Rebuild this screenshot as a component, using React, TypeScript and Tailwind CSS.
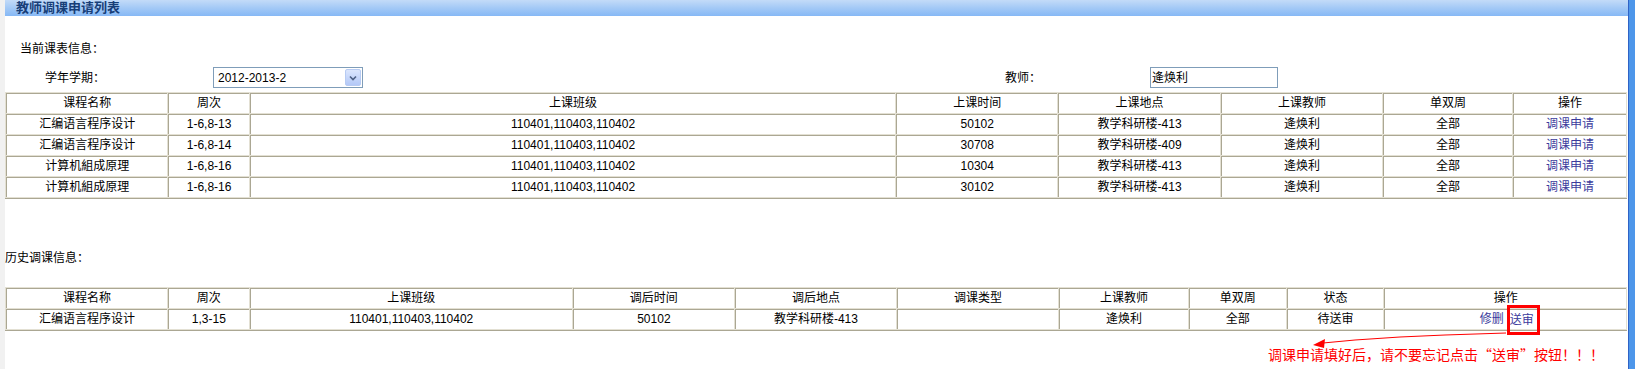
import React from "react"

const current = [
  ["汇编语言程序设计", "1-6,8-13", "110401,110403,110402", "50102", "教学科研楼-413", "逄焕利", "全部"],
  ["汇编语言程序设计", "1-6,8-14", "110401,110403,110402", "30708", "教学科研楼-409", "逄焕利", "全部"],
  ["计算机組成原理", "1-6,8-16", "110401,110403,110402", "10304", "教学科研楼-413", "逄焕利", "全部"],
  ["计算机組成原理", "1-6,8-16", "110401,110403,110402", "30102", "教学科研楼-413", "逄焕利", "全部"],
]

const cell = "h-[20px] border-t border-l border-[#aba793] bg-white p-0 text-center align-middle leading-[19px] font-normal whitespace-nowrap"

function Table({ widths, children }: { widths: string[]; children: React.ReactNode }) {
  return (
    <table className="w-[1622px] table-fixed border-separate border-spacing-[1px] border-b border-b-[#aba793] bg-[#e3e0d3]">
      <colgroup>
        {widths.map((w, i) => (
          <col key={i} style={{ width: w }} />
        ))}
      </colgroup>
      <tbody>{children}</tbody>
    </table>
  )
}

export default function App() {
  return (
    <div className="flex h-[369px] w-[1635px] overflow-hidden bg-white font-['Liberation_Sans','Noto_Sans_CJK_SC',sans-serif] text-[12px] text-black">
      <div className="w-[5px] shrink-0 bg-[#f1f1f1]" />

      <div className="relative flex min-w-0 flex-1 flex-col">
        {/* title bar */}
        <div className="flex h-[16px] items-center bg-gradient-to-b from-[#c3dbf8] via-[#a3c9f6] to-[#86b8f5] pl-[11px] text-[13px] font-bold leading-[16px] text-[#173e78]">
          教师调课申请列表
        </div>

        <div className="pl-[15px] pt-[26px] leading-[14px]">当前课表信息：</div>

        {/* term / teacher row */}
        <div className="mt-[11px] flex h-[21px] items-center">
          <div className="w-[208px] pl-[40px]">学年学期：</div>
          <div className="flex h-[21px] w-[150px] items-center justify-between border border-[#7f9db9] bg-white pl-[4px]">
            <span>2012-2013-2</span>
            <div className="mr-[1px] flex h-[17px] w-[16px] items-center justify-center rounded-[2px] border border-[#b7cbf3] bg-gradient-to-b from-[#dbe6fd] to-[#b3c8f7]">
              <svg width="8" height="6" viewBox="0 0 8 6">
                <path d="M1 1.5 L4 4.5 L7 1.5" fill="none" stroke="#4d6185" strokeWidth="1.6" />
              </svg>
            </div>
          </div>
          <div className="ml-[642px] w-[145px]">教师：</div>
          <div className="flex h-[21px] w-[128px] items-center border border-[#7f9db9] bg-white pl-[1px]">逄焕利</div>
        </div>

        {/* current schedule */}
        <div className="mt-[4px]">
          <Table widths={["10%", "5%", "40%", "10%", "10%", "10%", "8%", "7%"]}>
            <tr>
              {["课程名称", "周次", "上课班级", "上课时间", "上课地点", "上课教师", "单双周", "操作"].map((h) => (
                <th key={h} className={cell}>{h}</th>
              ))}
            </tr>
            {current.map((row, i) => (
              <tr key={i}>
                {row.map((v, j) => (
                  <td key={j} className={cell}>{v}</td>
                ))}
                <td className={cell}>
                  <a className="text-[#3b3b9c]">调课申请</a>
                </td>
              </tr>
            ))}
          </Table>
        </div>

        <div className="mt-[52px] leading-[14px]">历史调课信息：</div>

        {/* history */}
        <div className="mt-[22px]">
          <Table widths={["10%", "5%", "20%", "10%", "10%", "10%", "8%", "6%", "6%", "15%"]}>
            <tr>
              {["课程名称", "周次", "上课班级", "调后时间", "调后地点", "调课类型", "上课教师", "单双周", "状态", "操作"].map((h) => (
                <th key={h} className={cell}>{h}</th>
              ))}
            </tr>
            <tr>
              {["汇编语言程序设计", "1,3-15", "110401,110403,110402", "50102", "教学科研楼-413", "", "逄焕利", "全部", "待送审"].map((v, j) => (
                <td key={j} className={cell}>{v}</td>
              ))}
              <td className={cell}>
                <span className="relative left-[1px] inline-flex items-center">
                  <a className="text-[#3b3b9c]">修删</a>
                  <span className="relative ml-[6px] leading-[12px]">
                    <a className="text-[#3b3b9c]">送审</a>
                    <span className="absolute -top-[9px] -bottom-[9px] -left-[3px] -right-[6px] border-[3px] border-[#ff0000]" />
                  </span>
                </span>
              </td>
            </tr>
          </Table>
        </div>

        <div className="mt-[15px] pl-[1263px] font-['Noto_Sans_CJK_SC',sans-serif] text-[14px] leading-[16px] whitespace-nowrap text-[#ff0000]">
          调课申请填好后，请不要忘记点击“送审”按钮！！！
        </div>

        {/* arrow from the 送审 box to the note */}
        <svg className="pointer-events-none absolute left-0 top-0" width="1623" height="369">
          <polyline points="1501,333 1440,335 1395,337 1350,340 1318,343" fill="none" stroke="#ff0000" strokeWidth="1" />
          <polygon points="1308,345 1320,339 1319,348" fill="#ff0000" />
        </svg>
      </div>

      <div className="w-[7px] shrink-0 border-l border-[#2f63c6] bg-[#4d96ea]" />
    </div>
  )
}
